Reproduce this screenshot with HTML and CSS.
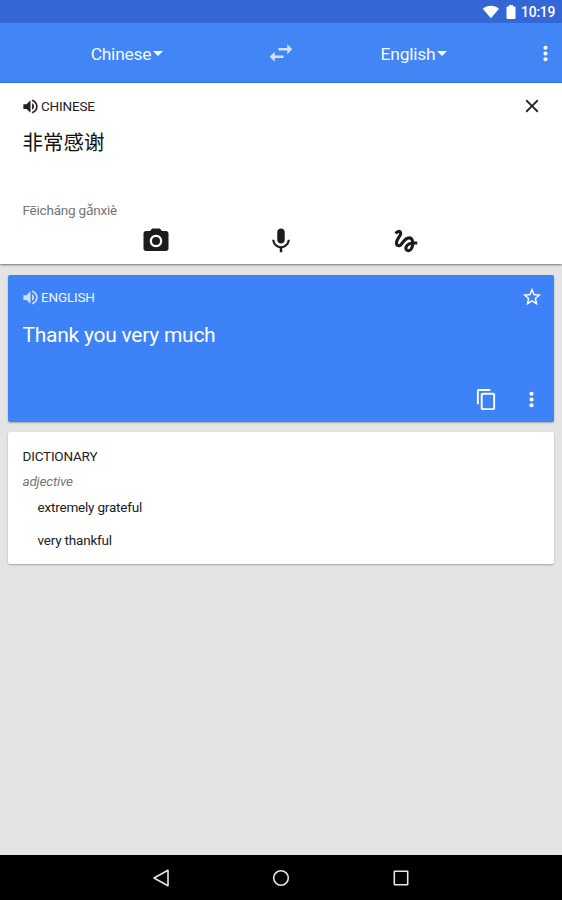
FILE: index.html
```html
<!DOCTYPE html>
<html lang="en">
<head>
<meta charset="utf-8">
<title>Translate</title>
<link rel="stylesheet" href="styles.css">
</head>
<body>
<div class="screen">
  <div class="status">
    <svg class="wifi" width="18" height="14" viewBox="0 0 18 14"><path d="M.8 3.700C5-.3 12.800-.3 17 3.700L8.900 13.300z"/></svg>
    <svg class="battery" width="10" height="14" viewBox="0 0 10 14"><path d="M3 0h4v1.600h1.600q.9 0 .9.900v10.600q0 .9-.9.900H1.400q-.9 0-.9-.9V2.500q0-.9.900-.9H3z"/></svg>
    <span class="clock">10:19</span>
  </div>
  <header class="appbar">
    <div class="lang"><span>Chinese</span><i class="caret"></i></div>
    <svg class="swap" width="30" height="30" viewBox="0 0 24 24"><path d="M6.990 11L3 15l3.990 4v-3H14v-2H6.990v-3zM21 9l-3.990-4v3H10v2h7.010v3L21 9z"/></svg>
    <div class="lang"><span>English</span><i class="caret"></i></div>
    <svg class="more" width="23" height="23" viewBox="0 0 24 24"><circle cx="12" cy="6" r="2.150"/><circle cx="12" cy="12" r="2.150"/><circle cx="12" cy="18" r="2.150"/></svg>
  </header>
  <section class="source">
    <div class="head">
      <svg class="vol" width="19" height="19" viewBox="0 0 24 24"><path d="M3 9v6h4l5 5V4L7 9H3zm13.500 3c0-1.770-1.020-3.290-2.500-4.030v8.050c1.480-.73 2.500-2.250 2.500-4.020zM14 3.230v2.060c2.890.86 5 3.540 5 6.710s-2.110 5.850-5 6.710v2.060c4.010-.91 7-4.490 7-8.770s-2.990-7.860-7-8.770z"/></svg>
      <span class="label">CHINESE</span>
      <svg class="end" width="22" height="22" viewBox="0 0 24 24"><path d="M19 6.410L17.590 5 12 10.590 6.410 5 5 6.410 10.590 12 5 17.590 6.410 19 12 13.410 17.590 19 19 17.590 13.410 12z"/></svg>
    </div>
    <div class="hanzi" lang="zh">非常感谢</div>
    <div class="pinyin">Fēicháng gǎnxiè</div>
    <div class="inputs">
      <svg width="30" height="30" viewBox="0 0 24 24"><circle cx="12" cy="12" r="3.200"/><path d="M9 2L7.170 4H4c-1.100 0-2 .9-2 2v12c0 1.100.9 2 2 2h16c1.100 0 2-.9 2-2V6c0-1.100-.9-2-2-2h-3.170L15 2H9zm3 15c-2.760 0-5-2.240-5-5s2.240-5 5-5 5 2.240 5 5-2.240 5-5 5z"/></svg>
      <svg width="30" height="30" viewBox="0 0 24 24"><path d="M12 14c1.660 0 2.990-1.340 2.990-3L15 5c0-1.660-1.340-3-3-3S9 3.340 9 5v6c0 1.660 1.340 3 3 3zm5.300-3c0 3-2.540 5.100-5.300 5.100S6.700 14 6.700 11H5c0 3.410 2.720 6.230 6 6.720V21h2v-3.280c3.280-.48 6-3.300 6-6.720h-1.700z"/></svg>
      <svg width="30" height="30" viewBox="0 0 24 24"><path d="M4.590 6.890c.7-.71 1.400-1.350 1.710-1.220.5.200 0 1.030-.3 1.520-.25.420-2.860 3.890-2.860 6.310 0 1.280.48 2.340 1.340 2.980.75.560 1.740.73 2.640.46 1.070-.31 1.950-1.400 3.060-2.770 1.210-1.490 2.830-3.440 4.080-3.440 1.630 0 1.650 1.010 1.760 1.790-3.780.64-5.380 3.670-5.380 5.370s1.440 3.090 3.210 3.090c1.630 0 4.290-1.330 4.690-6.100H21v-2.500h-2.470c-.15-1.650-1.090-4.200-4.030-4.200-2.250 0-4.180 1.910-4.940 2.840-.58.730-2.060 2.480-2.290 2.720-.25.300-.68.840-1.110.84-.45 0-.72-.83-.36-1.920.35-1.090 1.400-2.860 1.850-3.520.78-1.140 1.300-1.920 1.300-3.280C8.950 3.690 7.310 3 6.440 3 5.120 3 3.970 4 3.720 4.250c-.36.360-.66.660-.88.930l1.750 1.710zm9.290 11.660c-.31 0-.74-.26-.74-.72 0-.6.730-2.200 2.870-2.760-.3 2.690-1.430 3.480-2.130 3.480z"/></svg>
    </div>
  </section>
  <main class="content">
    <section class="card target">
      <div class="head">
        <svg class="vol" width="19" height="19" viewBox="0 0 24 24"><path d="M3 9v6h4l5 5V4L7 9H3zm13.500 3c0-1.770-1.020-3.290-2.500-4.030v8.050c1.480-.73 2.500-2.250 2.500-4.020zM14 3.230v2.060c2.890.86 5 3.540 5 6.710s-2.110 5.850-5 6.710v2.060c4.010-.91 7-4.490 7-8.770s-2.990-7.860-7-8.770z"/></svg>
        <span class="label">ENGLISH</span>
        <svg class="end" width="22" height="22" viewBox="0 0 24 24"><path d="M22 9.240l-7.190-.62L12 2 9.190 8.630 2 9.240l5.460 4.730L5.820 21 12 17.270 18.180 21l-1.630-7.030L22 9.240zM12 15.400l-3.760 2.270 1-4.280-3.320-2.880 4.380-.38L12 6.100l1.710 4.040 4.380.38-3.320 2.880 1 4.280L12 15.400z"/></svg>
      </div>
      <div class="result">Thank you very much</div>
      <div class="actions">
        <svg width="23" height="23" viewBox="0 0 24 24"><path d="M16 1H4c-1.100 0-2 .9-2 2v14h2V3h12V1zm3 4H8c-1.100 0-2 .9-2 2v14c0 1.100.9 2 2 2h11c1.100 0 2-.9 2-2V7c0-1.100-.9-2-2-2zm0 16H8V7h11v14z"/></svg>
        <svg width="23" height="23" viewBox="0 0 24 24"><circle cx="12" cy="6" r="2.150"/><circle cx="12" cy="12" r="2.150"/><circle cx="12" cy="18" r="2.150"/></svg>
      </div>
    </section>
    <section class="card dictionary">
      <div class="title">DICTIONARY</div>
      <div class="pos">adjective</div>
      <div class="entry">extremely grateful</div>
      <div class="entry">very thankful</div>
    </section>
  </main>
  <nav class="navbar">
    <svg width="20" height="20" viewBox="0 0 20 20"><path d="M17 2.300v15.400L3 10z"/></svg>
    <svg width="20" height="20" viewBox="0 0 20 20"><circle cx="10" cy="10" r="7.300"/></svg>
    <svg width="20" height="20" viewBox="0 0 20 20"><rect x="3.300" y="3.300" width="13.400" height="13.400" rx=".5"/></svg>
  </nav>
</div>
</body>
</html>
```
FILE: styles.css
```css
* { box-sizing: border-box; }
body {
  margin: 0;
  font-family: Roboto, "Noto Sans CJK SC", sans-serif;
  color: #212121;
}
svg { display: block; fill: currentColor; flex: none; }
.screen {
  width: 562px;
  height: 900px;
  display: flex;
  flex-direction: column;
  background: #e4e4e4;
  overflow: hidden;
}
.status {
  height: 23px;
  flex: none;
  display: flex;
  align-items: center;
  justify-content: flex-end;
  padding: 0 7px 0 0;
  background: #3367d6;
  color: #fff;
}
.battery { margin-left: 5.5px; }
.clock {
  width: 34px;
  margin-left: 5.5px;
  padding-top: 1px;
  font-size: 13.8px;
  letter-spacing: -.15px;
  font-weight: 500;
  line-height: 20px;
  white-space: nowrap;
}
.appbar {
  height: 60px;
  flex: none;
  display: grid;
  grid-template-columns: 254px 54px 212px 42px;
  align-items: center;
  justify-items: center;
  padding-top: 1px;
  background: #4285f4;
  border-bottom: 1px solid #3079ee;
  color: #fff;
}
.lang {
  display: flex;
  align-items: center;
  gap: 2px;
  padding-top: 1px;
  font-size: 17.4px;
  letter-spacing: -.2px;
  line-height: 24px;
}
.appbar .lang { color: #f4f8ff; }
.caret {
  border: 5px solid transparent;
  border-top-color: #fff;
  border-bottom: 0;
}
.swap { color: #d4e2fc; }
.more { margin-left: 8px; }
.source {
  height: 181px;
  flex: none;
  padding: 12px 19px 0 20px;
  background: #fff;
  box-shadow: 0 1px 2px rgba(0, 0, 0, .5);
}
.head {
  display: flex;
  align-items: center;
  height: 22px;
}
.label {
  margin-left: 2px;
  font-size: 13.5px;
  letter-spacing: -.2px;
  line-height: 20px;
  padding-bottom: 1px;
}
.vol { margin-left: .5px; margin-right: -.5px; }
.end { margin-left: auto; }
.hanzi {
  margin: 9px 0 0 2.5px;
  font-family: "Noto Sans CJK SC", sans-serif;
  font-size: 20.5px;
  line-height: 30px;
  color: #111;
}
.pinyin {
  margin: 44px 0 0 2.5px;
  font-size: 13.5px;
  letter-spacing: -.22px;
  line-height: 20px;
  color: #757575;
}
.inputs {
  display: flex;
  gap: 95px;
  margin: 6px 0 0 120.5px;
  color: #1c1c1c;
}
.content {
  flex: 1;
  padding: 11px 8px 0;
  display: flex;
  flex-direction: column;
  gap: 10px;
}
.card {
  border-radius: 2px;
  box-shadow: 0 1px 2px rgba(0, 0, 0, .28);
}
.target {
  height: 147px;
  padding: 11px 11px 0 12px;
  background: #3d82f7;
  color: #fff;
}
.target .vol { color: #cfe0fd; }
.target .label { color: #f0f5ff; }
.result {
  margin: 12px 0 0 2.5px;
  font-size: 21px;
  letter-spacing: -.25px;
  line-height: 30px;
}
.actions {
  display: flex;
  justify-content: flex-end;
  gap: 22px;
  margin-top: 38px;
}
.dictionary {
  height: 132px;
  padding: 13px 14.5px 0;
  background: #fff;
  font-size: 13.5px;
  letter-spacing: -.2px;
}
.title { line-height: 22px; }
.pos {
  margin-top: 4px;
  line-height: 20px;
  font-style: italic;
  color: #757575;
}
.entry {
  margin: 6px 0 13px 15px;
  line-height: 20px;
}
.navbar {
  height: 45px;
  flex: none;
  display: flex;
  align-items: center;
  justify-content: center;
  gap: 100px;
  background: #000;
}
.navbar svg {
  fill: none;
  stroke: #e6e6e6;
  stroke-width: 1.6;
  stroke-linejoin: round;
}
```
